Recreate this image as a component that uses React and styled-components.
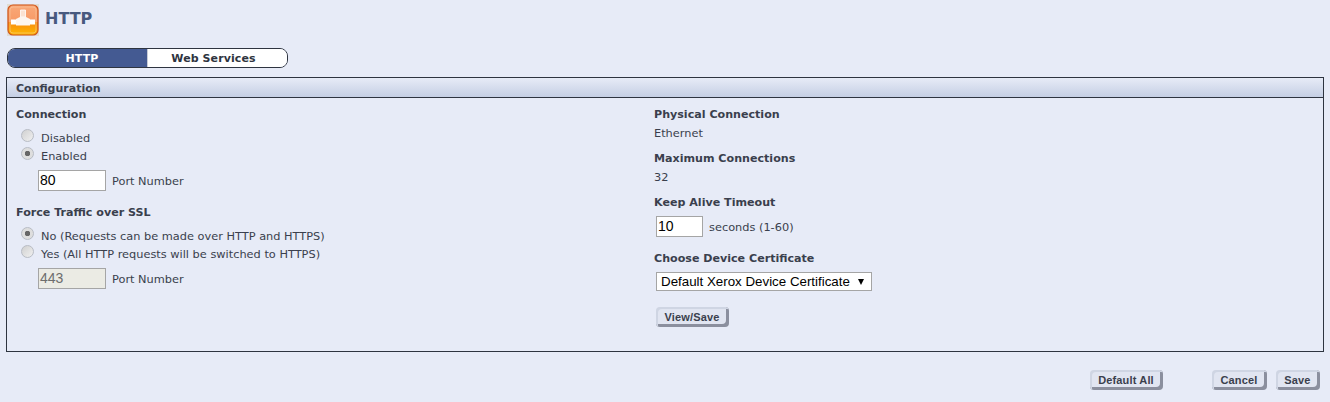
import React from 'react';
import styled, { createGlobalStyle } from 'styled-components';

const GlobalStyle = createGlobalStyle`
  html, body {
    margin: 0;
    background: #e7ebf7;
    color: #3a3f4d;
    font-family: "DejaVu Sans", Verdana, sans-serif;
    font-size: 11.35px;
  }
`;

const Page = styled.div`
  width: 1330px;
  height: 402px;
  padding: 4px 6px 0 6px;
  box-sizing: border-box;
  overflow: hidden;
`;

const TitleRow = styled.div`
  display: flex;
  align-items: center;
  gap: 6px;
  height: 32px;
  padding-left: 1px;
`;

const Title = styled.h1`
  margin: 0 0 3px;
  font-size: 16px;
  font-weight: bold;
  color: #47597f;
`;

const Tabs = styled.div`
  display: flex;
  width: 281px;
  height: 20px;
  margin: 12px 0 9px 1px;
  box-sizing: border-box;
  border: 1px solid #2e3440;
  border-radius: 8px;
  overflow: hidden;
`;

const Tab = styled.div`
  width: ${p => (p.$active ? '139px' : '140px')};
  box-sizing: border-box;
  display: flex;
  align-items: center;
  justify-content: center;
  font-size: 11px;
  font-weight: bold;
  letter-spacing: 0.1px;
  padding: ${p => (p.$active ? '0 0 0 9px' : '0 8px 0 0')};
  background: ${p => (p.$active ? '#445a92' : '#fff')};
  color: ${p => (p.$active ? '#fff' : '#2e3440')};
  border-left: ${p => (p.$active ? 'none' : '1px solid #c8ccd6')};
`;

const Panel = styled.section`
  width: 1318px;
  height: 275px;
  box-sizing: border-box;
  border: 1px solid #2e3440;
`;

const PanelHeader = styled.div`
  height: 20px;
  box-sizing: border-box;
  padding: 4px 9px 0;
  font-size: 11px;
  font-weight: bold;
  color: #3a3f4d;
  border-bottom: 1px solid #2e3440;
  background: linear-gradient(#e7ebf7, #c5cfe4);
`;

const Columns = styled.div`
  display: grid;
  grid-template-columns: 638px 1fr;
  padding: 10px 9px 0;
`;

const Column = styled.div`
  display: flex;
  flex-direction: column;
`;

const RadioGroup = styled.div`
  display: flex;
  flex-direction: column;
  margin-top: ${p => p.$top}px;
`;

const Heading = styled.div`
  font-size: 11.1px;
  font-weight: bold;
  line-height: 14px;
  color: #3a3f4d;
  margin-top: ${p => p.$top || 0}px;
`;

const Value = styled.div`
  line-height: 14px;
  margin-top: 4px;
`;

const RadioRow = styled.div`
  display: flex;
  align-items: center;
  height: 18px;
  gap: 7px;
  padding-left: 5px;
`;

const RadioDot = styled.span`
  width: 13px;
  height: 13px;
  margin-top: -5px;
  box-sizing: border-box;
  border-radius: 50%;
  border: 1px solid #b8bcc4;
  background: ${p => (p.$checked
    ? 'radial-gradient(circle, #666 0 2.5px, #dedede 3px)'
    : 'linear-gradient(135deg, #d0d0d0, #f0f0f0)')};
`;

const InputRow = styled.div`
  display: flex;
  align-items: center;
  gap: 6px;
  margin-top: ${p => p.$top || 0}px;
  padding-left: ${p => p.$left || 0}px;
`;

const InputLabel = styled.span`
  padding-top: 1px;
`;

const TextBox = styled.div`
  width: ${p => p.$width}px;
  height: 21px;
  box-sizing: border-box;
  border: 1px solid #a5a5a5;
  background: ${p => (p.$disabled ? '#ebebe4' : '#fff')};
  color: ${p => (p.$disabled ? '#6d6d6d' : '#000')};
  font-family: "Liberation Sans", Arial, sans-serif;
  font-size: 14px;
  line-height: 18px;
  padding-left: 1px;
`;

const Select = styled.div`
  width: 216px;
  height: 19px;
  margin: 6px 0 0 2px;
  box-sizing: border-box;
  display: flex;
  align-items: center;
  justify-content: space-between;
  padding: 0 7px 0 4px;
  background: #fff;
  border: 1px solid #a5a5a5;
  color: #000;
  font-family: "Liberation Sans", Arial, sans-serif;
  font-size: 13.33px;
`;

const Caret = styled.span`
  width: 0;
  height: 0;
  border-left: 3.5px solid transparent;
  border-right: 3.5px solid transparent;
  border-top: 6px solid #000;
`;

const Button = styled.button`
  display: block;
  height: 20px;
  width: ${p => p.$width}px;
  margin: ${p => p.$top || 0}px 0 0 ${p => p.$left || 0}px;
  padding: 0 1px 1px 0;
  box-sizing: border-box;
  border: none;
  border-radius: 4px;
  background: #e1e5f1;
  color: #3a3f4d;
  font-family: "Liberation Sans", Arial, sans-serif;
  font-size: 11px;
  font-weight: bold;
  letter-spacing: 0.15px;
  box-shadow: inset 2px 2px 0 #cfd5e3, inset -3px -3px 0 #8b8f9e;
`;

const Footer = styled.div`
  display: flex;
  justify-content: flex-end;
  margin-top: 18px;
  padding-right: 4px;
  gap: 9px;
`;

const FooterGap = styled.div`
  width: 31px;
`;

function HttpIcon() {
  return (
    <svg width="32" height="32" viewBox="0 0 32 32">
      <defs>
        <linearGradient id="iconFill" x1="0" y1="0" x2="0" y2="1">
          <stop offset="0" stopColor="#f9a878" />
          <stop offset="0.55" stopColor="#f79a66" />
          <stop offset="0.56" stopColor="#f98a10" />
          <stop offset="1" stopColor="#fdb900" />
        </linearGradient>
      </defs>
      <rect width="32" height="32" fill="#e0dcd4" />
      <rect x="1" y="1" width="30" height="30" rx="5" fill="url(#iconFill)" stroke="#d0551c" strokeWidth="1.2" />
      <rect x="3" y="3" width="26" height="26" rx="3" fill="none" stroke="#fbd0a8" strokeWidth="0.7" opacity="0.7" />
      <path d="M13.5 6h5v7h-5z" fill="#fbe2d2" stroke="#fff" strokeWidth="0.8" />
      <path d="M9 15l4-2h6l4 2v6.5H9z" fill="#fdf6f0" />
      <rect x="4" y="15.5" width="5" height="5" fill="#fff" />
      <rect x="23" y="15.5" width="5" height="5" fill="#fff" />
    </svg>
  );
}

function Radio({ checked, children }) {
  return (
    <RadioRow>
      <RadioDot $checked={checked} />
      <span>{children}</span>
    </RadioRow>
  );
}

export default function App() {
  return (
    <Page>
      <GlobalStyle />
      <TitleRow>
        <HttpIcon />
        <Title>HTTP</Title>
      </TitleRow>
      <Tabs>
        <Tab $active>HTTP</Tab>
        <Tab>Web Services</Tab>
      </Tabs>
      <Panel>
        <PanelHeader>Configuration</PanelHeader>
        <Columns>
          <Column>
            <Heading>Connection</Heading>
            <RadioGroup $top={7}>
              <Radio>Disabled</Radio>
              <Radio checked>Enabled</Radio>
            </RadioGroup>
            <InputRow $left={22} $top={5}>
              <TextBox $width={68}>80</TextBox>
              <InputLabel>Port Number</InputLabel>
            </InputRow>
            <Heading $top={15}>Force Traffic over SSL</Heading>
            <RadioGroup $top={7}>
              <Radio checked>No (Requests can be made over HTTP and HTTPS)</Radio>
              <Radio>Yes (All HTTP requests will be switched to HTTPS)</Radio>
            </RadioGroup>
            <InputRow $left={22} $top={5}>
              <TextBox $width={68} $disabled>443</TextBox>
              <InputLabel>Port Number</InputLabel>
            </InputRow>
          </Column>
          <Column>
            <Heading>Physical Connection</Heading>
            <Value>Ethernet</Value>
            <Heading $top={12}>Maximum Connections</Heading>
            <Value>32</Value>
            <Heading $top={12}>Keep Alive Timeout</Heading>
            <InputRow $left={2} $top={6}>
              <TextBox $width={47}>10</TextBox>
              <span>seconds (1-60)</span>
            </InputRow>
            <Heading $top={15}>Choose Device Certificate</Heading>
            <Select>
              <span>Default Xerox Device Certificate</span>
              <Caret />
            </Select>
            <Button $width={73} $top={16} $left={2}>View/Save</Button>
          </Column>
        </Columns>
      </Panel>
      <Footer>
        <Button $width={73}>Default All</Button>
        <FooterGap />
        <Button $width={55}>Cancel</Button>
        <Button $width={44}>Save</Button>
      </Footer>
    </Page>
  );
}
